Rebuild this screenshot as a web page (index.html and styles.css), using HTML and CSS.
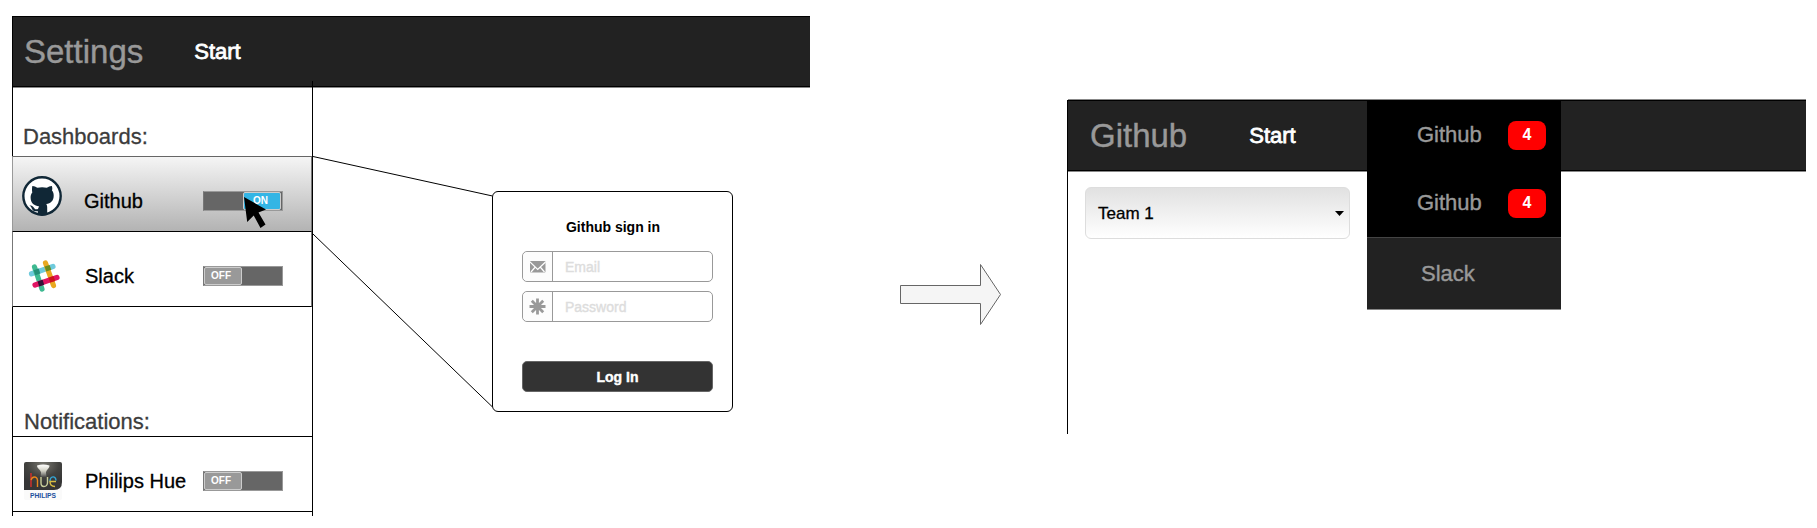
FILE: index.html
```html
<!DOCTYPE html>
<html lang="en">
<head>
<meta charset="utf-8">
<title>Settings</title>
<link rel="stylesheet" href="styles.css">
</head>
<body>
<main class="page">
  <section class="settings">
    <header class="bar settings-bar">
      <h1 class="brand">Settings</h1>
      <a class="nav-link">Start</a>
    </header>
    <div class="settings-body">
      <aside class="sidebar">
        <h2 class="group">Dashboards:</h2>
        <div class="row row-active">
          <svg class="row-icon" viewBox="0 0 40 40">
            <circle cx="20" cy="20" r="18.7" fill="#fff" stroke="#102736" stroke-width="2.4"/>
            <path fill="#102736" d="M10.3 10.2c.2-.7 3.4.4 5.200 1.600 2.800-.7 6.400-.7 9.200 0 1.800-1.200 5-2.300 5.200-1.600.5 1.400.5 3 .1 4.200 1.200 1.400 1.700 3 1.700 5 0 5.500-3 7.800-7.500 8.600.8 1 1 2.200 1 3.600v7.200a19 19 0 0 1-9.300 0v-3.600c-4 .7-5.300-.8-6.200-3-.5-1.200-1.300-1.900-2.300-2.600 2.600-.8 3.900 1.200 4.900 2.600.9 1.200 2.200 1.400 3.700.9.2-1.200.6-2 1.200-2.700-4.800-.8-8.600-3.200-8.600-9 0-2 .6-3.700 1.700-5-.4-1.800-.4-4.300 0-6.200z"/>
          </svg>
          <span class="label">Github</span>
          <span class="switch switch-on"><span class="knob">ON</span></span>
          <svg class="cursor" viewBox="0 0 22 32"><path d="M0 0L22 12.500L14.500 15.500L21.500 27.500L16.500 31L9.700 18.500L3.200 25Z"/></svg>
        </div>
        <div class="row row-slack">
          <svg class="row-icon" viewBox="0 0 40 40">
            <g fill="none" stroke-width="5.200" stroke-linecap="round">
              <path stroke="#6ecadc" d="M9.500 18.800L31 11.500"/>
              <path stroke="#e9a820" d="M23.500 8L31.500 30.500"/>
              <path stroke="#3eb991" d="M12.500 12L20 34"/>
              <path stroke="#e01563" d="M13 30L35 22.500"/>
            </g>
            <path fill="#248f78" d="M11.700 15.300l5-1.700 1.600 4.900-5 1.700z"/>
            <path fill="#6b8b1c" d="M22.600 11.600l5-1.700 1.700 4.900-5 1.700z"/>
            <path fill="#361238" d="M15.600 26.400l5-1.700 1.600 5-5 1.700z"/>
            <path fill="#cc1518" d="M26.500 22.700l5-1.700 1.700 4.900-5 1.700z"/>
          </svg>
          <span class="label">Slack</span>
          <span class="switch"><span class="knob">OFF</span></span>
        </div>
        <h2 class="group group-notifications">Notifications:</h2>
        <div class="row row-hue">
          <svg class="row-icon" viewBox="0 0 40 40">
            <defs>
              <radialGradient id="glow" cx=".5" cy=".1" r=".7"><stop offset="0" stop-color="#77766f"/><stop offset=".6" stop-color="#42423f"/><stop offset="1" stop-color="#363636"/></radialGradient>
              <linearGradient id="beam" x2="0" y2="1"><stop offset="0" stop-color="#fff"/><stop offset=".5" stop-color="#fffff0" stop-opacity=".7"/><stop offset="1" stop-color="#fff" stop-opacity="0"/></linearGradient>
            </defs>
            <rect x="1" y="1" width="38" height="38" rx="2" fill="#fafafa"/>
            <path fill="url(#glow)" d="M1 3a2 2 0 0 1 2-2h34a2 2 0 0 1 2 2v18q0 8-8 8H1z"/>
            <path fill="url(#beam)" d="M14 4.500q6-2 12.500 0c0 3-3 4-3.500 7l.5 5h-6l.5-5c-.5-3-4-4-4-7z"/>
            <g fill="none" stroke-width="1.400">
              <path stroke="#d8302b" d="M8 12v14"/><path stroke="#e8851c" d="M8 19q1-3 3.500-3t3 3v7"/>
              <path stroke="#c9cf9b" d="M18 16v6q0 3.500 3 3.500t3.500-3.500v-6"/>
              <path stroke="#35a8d8" d="M33 19.500c0-5-6-5-6 1"/><path stroke="#d8bd42" d="M33 20.500h-6q0 5 5 5"/>
            </g>
            <text class="philips" x="20" y="37" text-anchor="middle" textLength="26" lengthAdjust="spacingAndGlyphs">PHILIPS</text>
          </svg>
          <span class="label">Philips Hue</span>
          <span class="switch"><span class="knob">OFF</span></span>
        </div>
      </aside>
      <svg class="connector" viewBox="0 0 179 429"><path d="M0 69.500L179.500 109M0 147L179.500 320"/></svg>
      <form class="signin">
        <h3 class="signin-title">Github sign in</h3>
        <div class="field">
          <span class="field-icon"><svg width="16" height="12" viewBox="0 0 16 12"><rect width="15.500" height="11.500" rx="1" fill="#999"/><path d="M0 1L7.700 8.500L15.500 1M1 11L5.300 6M14.500 11L10.200 6" fill="none" stroke="#fff" stroke-width="1.200"/></svg></span>
          <span class="placeholder">Email</span>
        </div>
        <div class="field">
          <span class="field-icon"><svg width="17" height="17" viewBox="0 0 17 17"><path d="M8.500.5v16M.5 8.500h16M2.800 2.800l11.400 11.400M14.200 2.800L2.800 14.200" stroke="#999" stroke-width="2.800"/></svg></span>
          <span class="placeholder">Password</span>
        </div>
        <div class="login">Log In</div>
      </form>
    </div>
  </section>

  <svg class="arrow" viewBox="0 0 101 61"><path d="M.5 21.500H80.500V.5L100.500 30.500L80.500 60.500V39.500H.5Z"/></svg>

  <section class="dashboard">
    <header class="bar dashboard-bar">
      <h1 class="brand">Github</h1>
      <a class="nav-link">Start</a>
      <nav class="menu">
        <div class="menu-item"><span>Github</span><b class="badge">4</b></div>
        <div class="menu-item"><span>Github</span><b class="badge">4</b></div>
        <div class="menu-item menu-last"><span>Slack</span></div>
      </nav>
    </header>
    <div class="select"><span>Team 1</span><svg width="9" height="5" viewBox="0 0 9 5"><path d="M0 0h9L4.500 5z"/></svg></div>
  </section>
</main>
</body>
</html>
```
FILE: styles.css
```css
* { box-sizing: border-box; }
body {
  margin: 0;
  background: #fff;
  color: #000;
  font-family: "Liberation Sans", Arial, sans-serif;
}
h1, h2, h3 { margin: 0; font-weight: 400; }
svg { display: block; flex: none; }

.page {
  display: flex;
  align-items: flex-start;
  width: 1817px;
  height: 528px;
  padding-left: 12px;
  overflow: hidden;
}

.bar {
  display: flex;
  align-items: center;
  background: #222;
  border: 1px solid #000;
  border-right: 0;
}
.brand { font-size: 33px; line-height: 40px; color: #999; -webkit-text-stroke: .4px #999; }
.nav-link { font-size: 22px; line-height: 28px; color: #fff; -webkit-text-stroke: .8px #fff; }

/* Settings screen */
.settings { width: 798px; margin-top: 16px; flex: none; }
.settings-bar { height: 71px; padding-left: 11px; box-shadow: 0 1px #888; }
.settings-bar .nav-link { margin-left: 51px; }
.settings-body { display: flex; align-items: flex-start; height: 429px; }

.sidebar {
  position: relative;
  width: 301px;
  height: 429px;
  border: solid #000;
  border-width: 0 1px;
  flex: none;
}
/* The right edge runs a little way up over the title bar. */
.sidebar::after {
  content: "";
  position: absolute;
  top: -6px;
  right: -1px;
  width: 1px;
  height: 7px;
  background: #000;
}
.group {
  height: 69px;
  padding: 37px 0 0 10px;
  font-size: 22px;
  line-height: 26px;
  color: #3c3c3c;
  -webkit-text-stroke: .3px #3c3c3c;
}
.group-notifications { height: 129px; padding: 102px 0 0 11px; }

.row {
  position: relative;
  display: flex;
  align-items: center;
  height: 75px;
  padding-top: 14px;
  border-bottom: 1px solid #000;
}
.row-active {
  height: 76px;
  margin-left: -1px;
  border-top: 1px solid #666;
  border-left: 1px solid #999;
  border-right: 1px solid #777;
  background: linear-gradient(#f5f5f5, #b3b3b3);
}
.row-slack { margin-left: -1px; border-left: 1px solid #777; border-right: 1px solid #777; }
.row-hue { height: 76px; border-top: 1px solid #000; }
.row-icon { width: 40px; height: 40px; margin-left: 10px; }
.row-active .row-icon { margin: -10px 0 0 9px; }
.row-slack .row-icon { margin: -2px 1px 0 9px; }
.row-active .switch { margin-left: 1px; }
.label {
  width: 118px;
  margin-left: 22px;
  font-size: 20px;
  line-height: 24px;
  white-space: nowrap;
  -webkit-text-stroke: .3px #000;
}
.philips { font-size: 6.500px; font-weight: 700; fill: #1c4f9c; }

.switch {
  display: flex;
  width: 80px;
  height: 20px;
  background: #666;
  border: 1px solid #999;
  border-left-color: #777;
}
.switch-on { justify-content: flex-end; padding-right: 1px; }
.knob {
  width: 38px;
  height: 18px;
  padding-right: 4px;
  border: 1px solid #ccc;
  border-radius: 2px;
  background: #999;
  color: #fff;
  font-size: 10px;
  font-weight: 700;
  line-height: 15px;
  text-align: center;
}
.switch-on .knob { background: #33b5e5; padding-right: 3px; }
.cursor { position: absolute; left: 231px; top: 40px; width: 22px; height: 32px; }

.connector { width: 179px; height: 429px; fill: none; stroke: #000; stroke-width: 1; }

.signin {
  display: flex;
  flex-direction: column;
  width: 241px;
  height: 221px;
  margin-top: 104px;
  padding: 26px 19px 0 29px;
  border: 1px solid #000;
  border-radius: 6px;
  flex: none;
}
.signin-title {
  width: 182px;
  height: 33px;
  font-size: 14px;
  font-weight: 700;
  line-height: 18px;
  text-align: center;
}
.field {
  display: flex;
  width: 191px;
  height: 31px;
  margin-bottom: 9px;
  border: 1px solid #999;
  border-radius: 5px;
  flex: none;
}
.field-icon {
  display: flex;
  align-items: center;
  justify-content: center;
  width: 30px;
  background: #fcfcfc;
  border-right: 1px solid #999;
  border-radius: 5px 0 0 5px;
}
.placeholder { margin-left: 12px; font-size: 14px; line-height: 30px; color: #ddd; -webkit-text-stroke: .4px #ddd; }
.login {
  width: 191px;
  height: 31px;
  margin-top: 30px;
  border: 1px solid #666;
  border-radius: 5px;
  background: #333;
  color: #fff;
  font-size: 14px;
  font-weight: 700;
  line-height: 30px;
  text-align: center;
  -webkit-text-stroke: .4px #fff;
  flex: none;
}

.arrow { width: 101px; height: 61px; margin: 264px 0 0 90px; fill: #f5f5f5; stroke: #666; }

/* Dashboard screen */
.dashboard {
  width: 739px;
  height: 334px;
  margin: 100px 0 0 66px;
  border-left: 1px solid #000;
  flex: none;
}
.dashboard-bar {
  position: relative;
  height: 71px;
  padding-left: 22px;
  border-left: 0;
  box-shadow: 0 -1px #888, 0 1px #888;
}
.dashboard-bar .nav-link { margin-left: 62px; }
.menu {
  position: absolute;
  left: 299px;
  top: -1px;
  width: 194px;
  background: #000;
  color: #999;
  font-size: 22px;
}
.menu-item {
  display: flex;
  align-items: center;
  height: 68px;
  padding: 2px 0 0 50px;
  -webkit-text-stroke: .4px #999;
}
.menu-item .badge { margin-left: 26px; }
.menu-last { height: 73px; padding: 0 0 0 54px; margin-top: 1px; background: #222; border-top: 1px solid #444; border-bottom: 1px solid #888; }
.badge {
  width: 38px;
  height: 29px;
  border-radius: 8px;
  background: #f00;
  color: #fff;
  font-size: 16px;
  line-height: 28px;
  text-align: center;
  -webkit-text-stroke: 0;
}
.select {
  display: flex;
  align-items: center;
  justify-content: space-between;
  width: 265px;
  height: 52px;
  margin: 16px 0 0 17px;
  padding: 1px 5px 0 12px;
  border: 1px solid #ddd;
  border-radius: 6px;
  background: linear-gradient(#e1e1e1, #fff);
  font-size: 17px;
  -webkit-text-stroke: .3px #000;
}
```
